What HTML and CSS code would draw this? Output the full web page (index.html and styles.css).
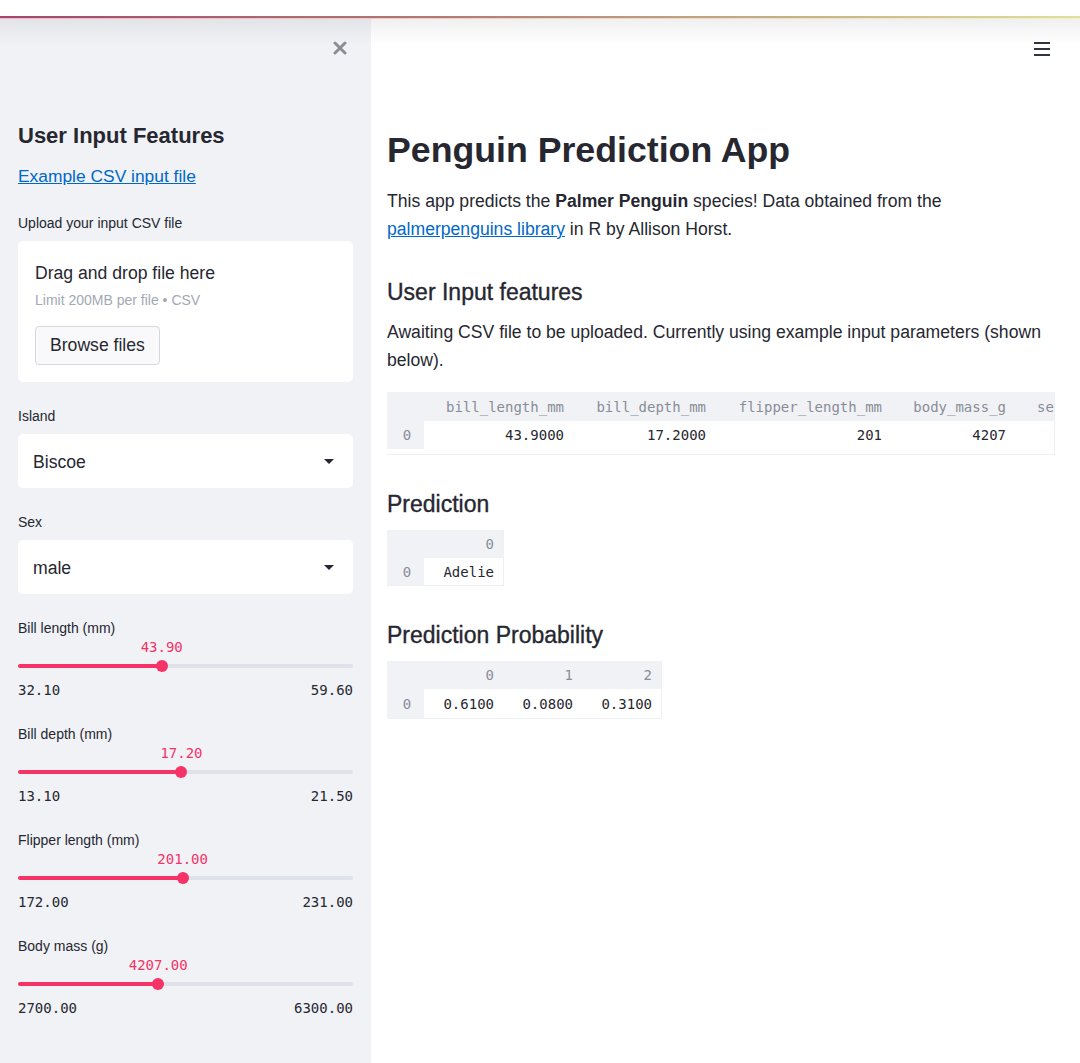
FILE: index.html
```html
<!DOCTYPE html>
<html lang="en">
<head>
<meta charset="utf-8">
<title>Penguin Prediction App</title>
<link rel="stylesheet" href="styles.css">
</head>
<body>
<div class="page">
  <div class="topgap"></div>
  <div class="deco"></div>
  <div class="deco-glow"></div>
  <div class="app">
    <aside class="sidebar">
      <div class="sb-head">
        <svg class="close" width="14" height="14" viewBox="0 0 14 14"><path d="M2 2 L12 12 M12 2 L2 12" stroke="#8c8e94" stroke-width="3" stroke-linecap="round"/></svg>
      </div>
      <h2 class="sb-title">User Input Features</h2>
      <a class="sb-link" href="#">Example CSV input file</a>
      <div class="label label-upload">Upload your input CSV file</div>
      <div class="uploader">
        <div class="drag">Drag and drop file here</div>
        <div class="limit">Limit 200MB per file • CSV</div>
        <button class="browse">Browse files</button>
      </div>

      <div class="label label-gap">Island</div>
      <div class="select"><span>Biscoe</span><svg width="10" height="5" viewBox="0 0 10 5"><polygon points="0,0 10,0 5,5" fill="#262730"/></svg></div>

      <div class="label label-gap">Sex</div>
      <div class="select"><span>male</span><svg width="10" height="5" viewBox="0 0 10 5"><polygon points="0,0 10,0 5,5" fill="#262730"/></svg></div>

      <div class="slider">
        <div class="label">Bill length (mm)</div>
        <div class="s-value"><span style="left:42.9%">43.90</span></div>
        <div class="s-track"><div class="s-bar"><div class="s-fill" style="width:42.9%"></div></div><div class="s-thumb" style="left:42.9%"></div></div>
        <div class="s-minmax"><span>32.10</span><span>59.60</span></div>
      </div>
      <div class="slider">
        <div class="label">Bill depth (mm)</div>
        <div class="s-value"><span style="left:48.8%">17.20</span></div>
        <div class="s-track"><div class="s-bar"><div class="s-fill" style="width:48.8%"></div></div><div class="s-thumb" style="left:48.8%"></div></div>
        <div class="s-minmax"><span>13.10</span><span>21.50</span></div>
      </div>
      <div class="slider">
        <div class="label">Flipper length (mm)</div>
        <div class="s-value"><span style="left:49.15%">201.00</span></div>
        <div class="s-track"><div class="s-bar"><div class="s-fill" style="width:49.15%"></div></div><div class="s-thumb" style="left:49.15%"></div></div>
        <div class="s-minmax"><span>172.00</span><span>231.00</span></div>
      </div>
      <div class="slider">
        <div class="label">Body mass (g)</div>
        <div class="s-value"><span style="left:41.86%">4207.00</span></div>
        <div class="s-track"><div class="s-bar"><div class="s-fill" style="width:41.86%"></div></div><div class="s-thumb" style="left:41.86%"></div></div>
        <div class="s-minmax"><span>2700.00</span><span>6300.00</span></div>
      </div>
    </aside>

    <main class="main">
      <div class="main-head">
        <svg class="burger" width="16" height="14" viewBox="0 0 16 14"><rect x="0" y="0" width="16" height="2" fill="#31333f"/><rect x="0" y="6" width="16" height="2" fill="#31333f"/><rect x="0" y="12" width="16" height="2" fill="#31333f"/></svg>
      </div>
      <h1 class="title">Penguin Prediction App</h1>
      <p class="text">This app predicts the <b>Palmer Penguin</b> species! Data obtained from the <a href="#">palmerpenguins library</a> in R by Allison Horst.</p>

      <h3 class="sub sub-first">User Input features</h3>
      <p class="text text-tight">Awaiting CSV file to be uploaded. Currently using example input parameters (shown below).</p>

      <div class="df df-wide">
        <table>
          <colgroup><col class="c-idx"><col style="width:149px"><col style="width:142px"><col style="width:176px"><col style="width:124px"><col style="width:120px"></colgroup>
          <thead><tr><th class="idx"></th><th>bill_length_mm</th><th>bill_depth_mm</th><th>flipper_length_mm</th><th>body_mass_g</th><th class="left">sex</th></tr></thead>
          <tbody><tr><td class="idx">0</td><td>43.9000</td><td>17.2000</td><td>201</td><td>4207</td><td>male</td></tr></tbody>
        </table>
      </div>

      <h3 class="sub">Prediction</h3>
      <div class="df">
        <table>
          <colgroup><col class="c-idx"><col class="c-79"></colgroup>
          <thead><tr><th class="idx"></th><th>0</th></tr></thead>
          <tbody><tr class="short"><td class="idx">0</td><td>Adelie</td></tr></tbody>
        </table>
      </div>

      <h3 class="sub sub-last">Prediction Probability</h3>
      <div class="df">
        <table>
          <colgroup><col class="c-idx"><col class="c-79"><col class="c-79"><col class="c-79"></colgroup>
          <thead><tr><th class="idx"></th><th>0</th><th>1</th><th>2</th></tr></thead>
          <tbody><tr class="tall"><td class="idx">0</td><td>0.6100</td><td>0.0800</td><td>0.3100</td></tr></tbody>
        </table>
      </div>
    </main>
  </div>
  <div class="header-shadow"></div>
</div>
</body>
</html>
```

FILE: styles.css
```css
* { box-sizing: border-box; }

html, body {
  margin: 0;
  padding: 0;
  background: #ffffff;
}

body {
  font-family: "Liberation Sans", Arial, sans-serif;
  color: #262730;
}

.page {
  position: relative;
  height: 1063px;
  overflow: hidden;
  display: flex;
  flex-direction: column;
}

.topgap { height: 16px; background: #ffffff; flex: none; }

.deco {
  height: 2px;
  flex: none;
  background: linear-gradient(90deg, #a6456e 0%, #b07a74 40%, #c7b487 75%, #e0e09c 100%);
}

.deco-glow {
  height: 1px;
  flex: none;
  background: linear-gradient(90deg, #f3b6c3 0%, #efd3c6 50%, #f3f0c8 100%);
}

.header-shadow {
  position: absolute;
  top: 19px;
  left: 0;
  right: 0;
  height: 26px;
  background: linear-gradient(rgba(0, 0, 0, 0.06), rgba(0, 0, 0, 0));
  pointer-events: none;
}

.app {
  flex: 1;
  display: flex;
  min-height: 0;
}

/* ---------- Sidebar ---------- */
.sidebar {
  width: 371px;
  flex: none;
  background: #f0f2f6;
  padding: 0 18px 0 18px;
  display: flex;
  flex-direction: column;
}

.sb-head {
  height: 60px;
  display: flex;
  justify-content: flex-end;
  padding-top: 22px;
  padding-right: 6px;
}

.sb-title {
  margin: 44px 0 0;
  font-size: 22px;
  line-height: 26px;
  font-weight: 700;
}

.sb-link {
  display: block;
  margin-top: 15px;
  font-size: 17.4px;
  line-height: 24px;
  color: #0068c9;
  text-decoration: underline;
  align-self: flex-start;
}

.label {
  font-size: 14px;
  line-height: 20px;
  color: #262730;
}

.label-upload { margin-top: 25px; }
.label-gap { margin-top: 24px; }

.uploader {
  margin-top: 8px;
  height: 141px;
  background: #ffffff;
  border-radius: 5px;
  padding: 20px 17px 17px;
  display: flex;
  flex-direction: column;
  align-items: flex-start;
}

.drag {
  font-size: 17.6px;
  line-height: 24px;
}

.limit {
  margin-top: 7px;
  font-size: 14px;
  line-height: 16px;
  color: #a3a8b4;
}

.browse {
  margin-top: 18px;
  height: 39px;
  padding: 0 14px;
  border: 1px solid #d6d7dc;
  border-radius: 4px;
  background: #f9f9fb;
  font-family: inherit;
  font-size: 17.6px;
  color: #262730;
}

.select {
  margin-top: 8px;
  height: 54px;
  background: #ffffff;
  border-radius: 5px;
  padding: 0 19px 0 15px;
  display: flex;
  align-items: center;
  justify-content: space-between;
  font-size: 17.6px;
}

.select span { position: relative; top: 1px; }

.slider { margin-top: 24px; }

.s-value {
  position: relative;
  height: 18px;
}

.s-value span {
  position: absolute;
  top: 0;
  transform: translateX(-50%);
  font-family: "DejaVu Sans Mono", "Liberation Mono", monospace;
  font-size: 14px;
  line-height: 18px;
  color: #f63366;
  white-space: nowrap;
}

.s-track {
  position: relative;
  height: 20px;
  display: flex;
  align-items: center;
}

.s-bar {
  width: 100%;
  height: 4px;
  border-radius: 2px;
  background: #dfe2ea;
  overflow: hidden;
}

.s-fill {
  height: 100%;
  background: #f63366;
}

.s-thumb {
  position: absolute;
  top: 4px;
  width: 12px;
  height: 12px;
  margin-left: -6px;
  border-radius: 50%;
  background: #f63366;
}

.s-minmax {
  margin-top: 4px;
  display: flex;
  justify-content: space-between;
  font-family: "DejaVu Sans Mono", "Liberation Mono", monospace;
  font-size: 14px;
  line-height: 20px;
  color: #262730;
}

/* ---------- Main ---------- */
.main {
  flex: 1;
  min-width: 0;
  padding: 0 25px 0 16px;
  background: #ffffff;
}

.main-head {
  height: 60px;
  display: flex;
  justify-content: flex-end;
  padding-top: 23px;
  padding-right: 5px;
}

.title {
  margin: 47px 0 0;
  font-size: 35.7px;
  line-height: 48px;
  font-weight: 700;
}

.text {
  margin: 13px 0 0;
  font-size: 17.6px;
  line-height: 28px;
}

.text a { color: #0068c9; text-decoration: underline; }
.text b { font-weight: 700; }

.text-tight { margin-top: 11px; }

.sub {
  margin: 34px 0 0;
  font-size: 23px;
  line-height: 30px;
  font-weight: 400;
  -webkit-text-stroke: 0.35px #262730;
}

.sub-last { margin-top: 34px; }

.df {
  margin-top: 11px;
  display: block;
  width: fit-content;
  border: 1px solid #eef0f4;
  border-top: none;
  border-left: none;
}

.df-wide {
  margin-top: 18px;
  width: 668px;
  overflow: hidden;
  padding-bottom: 5px;
}

.df table {
  border-collapse: collapse;
  table-layout: fixed;
  font-family: "DejaVu Sans Mono", "Liberation Mono", monospace;
  font-size: 14px;
}

.df-wide table { width: 748px; }

.c-idx { width: 37px; }
.c-79 { width: 79px; }

.df th, .df td {
  padding: 0 9px 0 0;
  text-align: right;
  white-space: nowrap;
  overflow: hidden;
}

.df th {
  height: 28px;
  background: #f0f2f6;
  color: #8a8d96;
  font-weight: 400;
}

.df-wide th { height: 29px; }

.df td {
  height: 28px;
  color: #262730;
  background: #ffffff;
}

.df tr.short td { height: 27px; }
.df tr.tall td { height: 29px; }

.df .idx {
  background: #f0f2f6;
  color: #8a8d96;
  text-align: center;
  padding: 0 0 0 3px;
}

.df .left {
  text-align: left;
  padding-left: 22px;
}
```
